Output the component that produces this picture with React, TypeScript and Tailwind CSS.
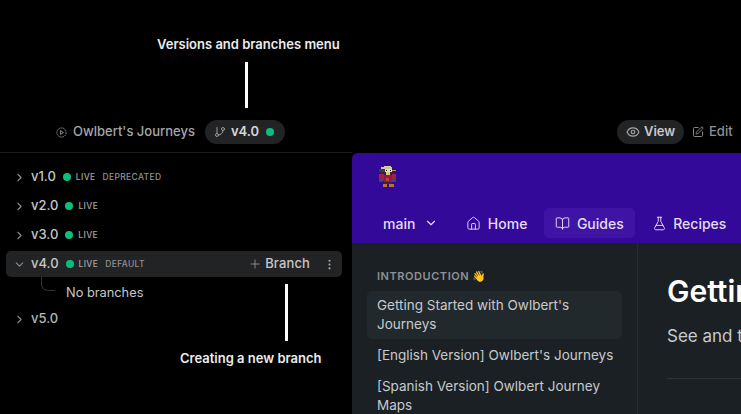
import { BookOpen, ChevronDown, ChevronRight, Eye, FlaskConical, GitBranch, Home, MoreVertical, Plus, SquarePen } from 'lucide-react';

const sprite: [number, number, number, number, string][] = [
    [6, 0, 7, 1, '#d8cfa8'],
    [4, 1, 10, 2, '#cfc59c'],
    [2, 3, 5, 3, '#3a3a48'],
    [7, 3, 7, 3, '#e8e0c0'],
    [8, 4, 1, 1, '#111111'],
    [12, 4, 1, 1, '#111111'],
    [14, 4, 3, 1, '#c99a3a'],
    [3, 6, 12, 2, '#2d2a3a'],
    [8, 6, 4, 3, '#e9c66a'],
    [2, 8, 4, 6, '#a51f3f'],
    [6, 9, 8, 6, '#8f1c3a'],
    [14, 8, 3, 6, '#a51f3f'],
    [2, 13, 3, 2, '#2c4a7a'],
    [14, 13, 3, 2, '#2c4a7a'],
    [8, 11, 3, 3, '#c43a55'],
    [6, 15, 8, 2, '#4a2030'],
    [5, 17, 4, 2, '#b5762a'],
    [11, 17, 4, 2, '#b5762a'],
];

function VersionRow({ name, tag, open }: { name: string; tag?: string; open?: boolean }) {
    return (
        <div className={`h-[26px] mt-[3px] flex items-center pl-[7px] pr-[6px] rounded-[5px] ${open ? 'bg-[#222325]' : ''}`}>
            {open
                ? <ChevronDown className="w-[13px] h-[13px] text-[#8b8d90]" />
                : <ChevronRight className="w-[13px] h-[13px] text-[#8b8d90]" />}
            <span className="ml-[5px] text-[13px] font-medium text-[#c6c7c8]">{name}</span>
            <span className="ml-[7px] w-[8px] h-[8px] rounded-full bg-[#0dbd7d] shrink-0" />
            <span className="ml-[5px] text-[8.5px] font-medium tracking-[0.04em] text-[#a4a6a8]">LIVE</span>
            {tag && <span className="ml-[7px] text-[8.5px] font-medium tracking-[0.04em] text-[#909295]">{tag}</span>}
            {open && (
                <div className="ml-auto flex items-center">
                    <Plus className="w-[14px] h-[14px] text-[#8b8d90]" strokeWidth={1.6} />
                    <span className="ml-[3px] text-[13px] font-medium tracking-[0.01em] text-[#c6c7c8]">Branch</span>
                    <MoreVertical className="ml-[13px] w-[13px] h-[13px] text-[#a4a6a8]" />
                </div>
            )}
        </div>
    );
}

function NavTab({ icon, label, active }: { icon: React.ReactNode; label: string; active?: boolean }) {
    return (
        <div className={`h-[30px] flex items-center gap-[6.5px] px-[11px] rounded-[5px] text-[14px] font-medium text-[#e4ddf3] ${active ? 'bg-[#3f13a3]' : ''}`}>
            {icon}
            {label}
        </div>
    );
}

export default function App() {
    return (
        <div className="relative w-[741px] h-[414px] overflow-hidden bg-black font-['Inter',sans-serif]">
            {/* Top bar */}
            <div className="h-[153px] flex items-end">
                <div className="w-[352px] h-[47px] flex items-center pl-[55px] border-b border-[#1c1d1e] pt-[6px]">
                    <svg viewBox="0 0 24 24" className="w-[13px] h-[13px] text-[#8c8e90]" fill="none" stroke="currentColor" strokeWidth="1.8">
                        <circle cx="12" cy="12" r="8.5" strokeDasharray="3 1.2" />
                        <path d="M10 8.5v7l5.5-3.5z" />
                    </svg>
                    <span className="ml-[5px] text-[13px] font-medium text-[#a5a7a9]">Owlbert's Journeys</span>
                    <div className="ml-[10px] w-[80px] h-[24px] rounded-full bg-[#222325] flex items-center pl-[9px]">
                        <GitBranch className="w-[12px] h-[12px] text-[#9a9c9e]" />
                        <span className="ml-[5px] text-[13px] font-semibold text-[#d5d6d7]">v4.0</span>
                        <span className="ml-[7px] w-[8px] h-[8px] rounded-full bg-[#0dbd7d]" />
                    </div>
                </div>
                <div className="flex-1 h-[47px] flex items-center pl-[265px] pt-[5px]">
                    <div className="w-[67px] h-[24px] rounded-full bg-[#222325] flex items-center pl-[9px]">
                        <Eye className="w-[14px] h-[14px] text-[#a5a7a9]" />
                        <span className="ml-[4px] text-[13px] font-semibold text-[#c9cacb]">View</span>
                    </div>
                    <SquarePen className="ml-[8px] w-[12px] h-[12px] text-[#85878a]" />
                    <span className="ml-[5px] text-[13px] font-medium text-[#8f9193]">Edit</span>
                </div>
            </div>

            <div className="flex h-[261px]">
                {/* Versions list */}
                <div className="w-[352px] pl-[6px] pr-[10px] pt-[8px]">
                    <VersionRow name="v1.0" tag="DEPRECATED" />
                    <VersionRow name="v2.0" />
                    <VersionRow name="v3.0" />
                    <VersionRow name="v4.0" tag="DEFAULT" open />
                    <div className="relative h-[29px] pt-[3px] flex items-center pl-[60px] text-[12.8px] text-[#c6c7c8]">
                        <span className="absolute left-[35px] top-0 w-[14px] h-[14px] border-l border-b border-[#303234] rounded-bl-[7px]" />
                        No branches
                    </div>
                    <div className="h-[26px] flex items-center pl-[7px]">
                        <ChevronRight className="w-[13px] h-[13px] text-[#8b8d90]" />
                        <span className="ml-[5px] text-[13px] font-medium text-[#b4b6b7]">v5.0</span>
                    </div>
                </div>

                {/* Docs preview */}
                <div className="flex-1 flex flex-col rounded-tl-[6px] overflow-hidden bg-[#1a2024]">
                    <div className="h-[90px] shrink-0 bg-[#33099a] flex flex-col">
                        <svg viewBox="0 0 19 19" className="w-[21px] h-[24px] ml-[25px] mt-[11px]" shapeRendering="crispEdges">
                            {sprite.map(([x, y, w, h, c], i) => (
                                <rect key={i} x={x} y={y} width={w} height={h} fill={c} />
                            ))}
                        </svg>
                        <div className="mt-[20px] flex items-center pl-[31px]">
                            <span className="text-[14px] font-medium text-[#e4ddf3]">main</span>
                            <ChevronDown className="ml-[9px] w-[14px] h-[14px] text-[#e4ddf3]" />
                            <div className="ml-[17px] flex items-center gap-[6px]">
                                <NavTab icon={<Home className="w-[15px] h-[15px]" strokeWidth={1.5} />} label="Home" />
                                <NavTab active icon={<BookOpen className="w-[15px] h-[15px]" strokeWidth={1.5} />} label="Guides" />
                                <NavTab icon={<FlaskConical className="w-[15px] h-[15px]" strokeWidth={1.5} />} label="Recipes" />
                            </div>
                        </div>
                    </div>
                    <div className="flex-1 flex">
                        <div className="w-[286px] shrink-0 border-r border-[#262c30] pl-[15px] pr-[15px] pt-[26px] text-[13.5px] leading-[19.5px] text-[#c7cacc]">
                            <div className="pl-[10px] flex items-center text-[11px] leading-[14px] font-semibold tracking-[0.05em] text-[#8d9295]">
                                INTRODUCTION <span className="ml-[3px] text-[11px]">👋</span>
                            </div>
                            <div className="mt-[8px] pl-[10px] py-[4.5px] rounded-[5px] bg-[#22292d]">Getting Started with Owlbert's Journeys</div>
                            <div className="mt-[7px] pl-[10px] whitespace-nowrap">[English Version] Owlbert's Journeys</div>
                            <div className="mt-[11px] pl-[10px]">[Spanish Version] Owlbert Journey Maps</div>
                        </div>
                        <div className="flex-1 pl-[29px] pt-[30px] overflow-hidden whitespace-nowrap">
                            <div className="text-[30px] leading-[36px] font-semibold text-white">Getting Started</div>
                            <div className="mt-[15px] text-[17px] leading-[24px] text-[#c7cacc]">See and test the API</div>
                            <div className="mt-[30px] h-px bg-[#2d3337]" />
                        </div>
                    </div>
                </div>
            </div>

            {/* Annotations */}
            <div className="absolute left-[157px] top-[36px] text-[13px] leading-[16px] font-semibold text-[#ececec] whitespace-nowrap">Versions and branches menu</div>
            <div className="absolute left-[245px] top-[62px] w-[3px] h-[46px] bg-white" />
            <div className="absolute left-[285px] top-[284px] w-[3px] h-[57px] bg-white" />
            <div className="absolute left-[180px] top-[350px] text-[13px] leading-[16px] font-semibold text-[#ececec] whitespace-nowrap">Creating a new branch</div>
        </div>
    );
}
